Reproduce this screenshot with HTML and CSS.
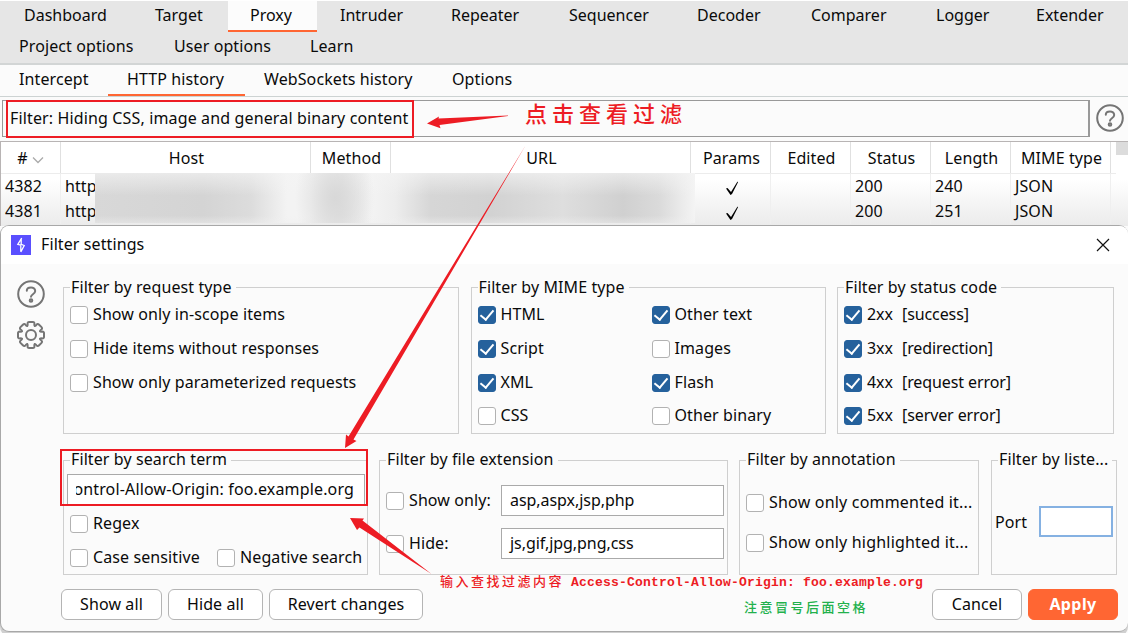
FILE: index.html
```html
<!DOCTYPE html>
<html lang="en">
<head>
<meta charset="utf-8">
<title>Proxy - Filter settings</title>
<link rel="stylesheet" href="styles.css">
</head>
<body>
<svg class="defs" aria-hidden="true">
  <symbol id="help" viewBox="0 0 28 28">
    <circle cx="14" cy="14" r="12.800"/>
    <path d="M9.800 10.800C9.800 8.600 11.800 7.400 14 7.400s4.200 1.400 4.200 3.600c0 3.200-4.200 3.200-4.200 5.800"/>
    <circle class="dot" cx="14" cy="20.500" r="1.300"/>
  </symbol>
  <symbol id="gear" viewBox="-14 -14 28 28">
    <g id="tooth"><path d="M9.100-3.800Q10-3.100 11.200-3.400 13-3.500 13-1.900V1.900Q13 3.500 11.200 3.400 10 3.100 9.100 3.800"/></g>
    <use href="#tooth" transform="rotate(45)"/><use href="#tooth" transform="rotate(90)"/>
    <use href="#tooth" transform="rotate(135)"/><use href="#tooth" transform="rotate(180)"/>
    <use href="#tooth" transform="rotate(225)"/><use href="#tooth" transform="rotate(270)"/>
    <use href="#tooth" transform="rotate(315)"/>
    <circle r="5"/>
  </symbol>
  <symbol id="tick" viewBox="0 0 14 16">
    <path d="M1 8.500 2.500 8 6 12 12.500 1.500 13 2.200 7 14 5.500 15Z"/>
  </symbol>
</svg>

<nav class="main-tabs">
  <div class="tab-row first">
    <span>Dashboard</span><span>Target</span><span class="on">Proxy</span><span>Intruder</span><span>Repeater</span><span>Sequencer</span><span>Decoder</span><span>Comparer</span><span>Logger</span><span>Extender</span>
  </div>
  <div class="tab-row second"><span>Project options</span><span>User options</span><span>Learn</span></div>
</nav>
<nav class="sub-tabs"><span>Intercept</span><span class="on">HTTP history</span><span>WebSockets history</span><span>Options</span></nav>

<section class="filter-bar">
  <div class="filter-field"><span>Filter: Hiding CSS, image and general binary content</span></div>
  <svg class="icon"><use href="#help"/></svg>
</section>

<section class="history">
  <div class="row head">
    <span># <svg class="sort" viewBox="0 0 12 8"><path d="M1 1.500 6 6.500 11 1.500"/></svg></span><span>Host</span><span>Method</span><span>URL</span><span>Params</span><span>Edited</span><span>Status</span><span>Length</span><span>MIME type</span><span class="end"></span>
  </div>
  <div class="rows">
    <div class="row"><span>4382</span><span>http</span><span></span><span></span><span class="mark"><svg><use href="#tick"/></svg></span><span></span><span>200</span><span>240</span><span>JSON</span><span class="end"></span></div>
    <div class="row"><span>4381</span><span>http</span><span></span><span></span><span class="mark"><svg><use href="#tick"/></svg></span><span></span><span>200</span><span>251</span><span>JSON</span><span class="end"></span></div>
  </div>
  <div class="masked"></div>
  <div class="thumb"></div>
</section>

<section class="dialog">
  <header>
    <svg class="logo" viewBox="0 0 20 20"><rect width="20" height="20"/><path d="M10.700 3 6.800 9.400 9.800 10.200M10.200 3.500V9.300L13.200 10.500 9.800 17M9.800 16.500V10.200"/></svg>
    <h1>Filter settings</h1>
    <svg class="close" viewBox="0 0 14 14"><path d="M1 1 13 13M13 1 1 13"/></svg>
  </header>
  <div class="body">
    <aside><svg class="icon"><use href="#help"/></svg><svg class="icon gear"><use href="#gear"/></svg></aside>
    <div class="groups top">
      <fieldset><legend>Filter by request type</legend>
        <div class="checks">
          <label><i></i>Show only in-scope items</label>
          <label><i></i>Hide items without responses</label>
          <label><i></i>Show only parameterized requests</label>
        </div>
      </fieldset>
      <fieldset><legend>Filter by MIME type</legend>
        <div class="checks two">
          <label><i class="on"></i>HTML</label><label><i class="on"></i>Other text</label>
          <label><i class="on"></i>Script</label><label><i></i>Images</label>
          <label><i class="on"></i>XML</label><label><i class="on"></i>Flash</label>
          <label><i></i>CSS</label><label><i></i>Other binary</label>
        </div>
      </fieldset>
      <fieldset><legend>Filter by status code</legend>
        <div class="checks codes">
          <label><i class="on"></i><b>2xx</b>[success]</label>
          <label><i class="on"></i><b>3xx</b>[redirection]</label>
          <label><i class="on"></i><b>4xx</b>[request error]</label>
          <label><i class="on"></i><b>5xx</b>[server error]</label>
        </div>
      </fieldset>
    </div>
    <div class="groups bottom">
      <fieldset><legend>Filter by search term</legend>
        <div class="field term"><span><em>ontrol-Allow-Origin: foo.example.org</em></span></div>
        <div class="term-checks">
          <label><i></i>Regex</label>
          <div><label><i></i>Case sensitive</label><label><i></i>Negative search</label></div>
        </div>
      </fieldset>
      <fieldset><legend>Filter by file extension</legend>
        <div class="ext">
          <label><i></i>Show only:</label><div class="field">asp,aspx,jsp,php</div>
          <label><i></i>Hide:</label><div class="field js">js,gif,jpg,png,css</div>
        </div>
      </fieldset>
      <fieldset><legend>Filter by annotation</legend>
        <div class="notes">
          <label><i></i>Show only commented it...</label>
          <label><i></i>Show only highlighted it...</label>
        </div>
      </fieldset>
      <fieldset class="listener"><legend>Filter by liste...</legend>
        <div class="port"><span>Port</span><div class="field focus"></div></div>
      </fieldset>
    </div>
    <footer>
      <button class="show">Show all</button><button class="hide">Hide all</button><button class="revert">Revert changes</button>
      <button class="cancel">Cancel</button><button class="apply">Apply</button>
    </footer>
  </div>
</section>

<svg class="arrows" viewBox="0 0 1128 633">
  <rect x="7" y="101" width="406" height="36"/>
  <rect x="61" y="450" width="306" height="55"/>
  <path d="M508 115.500 438.500 118.500 439 116.500 427 123.500 440.500 128.300 439.500 125 508 116Z"/>
  <path d="M525.500 145.500 348.500 436.500 346 434.500 345 448 356.500 441 353.500 439.500Z"/>
  <path d="M431.500 574 362.500 520.500 364 518.500 350 518 357 530 359.500 527.500Z"/>
</svg>
<p class="note click" lang="zh">点击查看过滤</p>
<p class="note enter" lang="zh">输入查找过滤内容<span>Access-Control-Allow-Origin: foo.example.org</span></p>
<p class="note space" lang="zh">注意冒号后面空格</p>
</body>
</html>
```

FILE: styles.css
```css
* { box-sizing: border-box; }
body {
  margin: 0;
  width: 1128px;
  height: 633px;
  overflow: hidden;
  position: relative;
  background: #fbfbfb;
  color: #0a0a0a;
  font: 16px/24px "Noto Sans", "Open Sans", sans-serif;
  letter-spacing: 0.100px;
  white-space: nowrap;
}
.defs { position: absolute; width: 0; height: 0; }

/* Tabs */
.main-tabs { height: 65px; border-top: 1px solid #fff; border-bottom: 2px solid #d2d5d5; background: #e6e6e6; }
.tab-row { display: grid; height: 31px; }
.tab-row span { padding: 2px 0 0 22px; }
.first { padding-left: 2px; grid-template-columns: 131px 95px 90px 111px 118px 128px 114px 125px 100px 112px; letter-spacing: 0; }
.first .on { width: 89px; background: #fcfcfc; border-bottom: 2px solid #ff6633; }
.second { grid-template-columns: 155px 136px 100px; }
.tab-row.second span { padding-left: 19px; }
.sub-tabs { display: grid; grid-template-columns: 108px 137px 188px 120px; height: 32px; border-bottom: 1px solid #cdd3d3; }
.sub-tabs span { padding: 2px 0 0 19px; }
.sub-tabs .on { border-bottom: 2px solid #ff6633; }

/* Filter bar */
.filter-bar { display: flex; height: 44px; padding: 3px 0 4px 2px; align-items: center; gap: 5.500px; }
.filter-field { flex: none; width: 1088px; height: 37px; border: 1px solid #999; border-right-width: 2px; padding: 5px 0 0 7px; letter-spacing: 0.140px; }
.icon { width: 28px; height: 28px; flex: none; fill: none; stroke: #757575; stroke-width: 2; stroke-linecap: round; stroke-linejoin: round; }
.icon .dot { fill: #757575; stroke: none; }
.filter-bar .icon { margin-top: -1px; }

/* History table */
.history { position: relative; height: 85px; border-top: 1px solid #b8b4b4; border-left: 1px solid #b8b4b4; background: #fff; }
.row { display: grid; width: 1115px; grid-template-columns: 60px 250px 80px 300px 80px 80px 80px 80px 100px 5px; height: 25px; }
.row span { border-right: 1px solid #efefef; padding-left: 4px; }
.row .end { border: 0; }
.head { height: 32px; border-bottom: 1px solid #ececec; }
.head span { border-color: #e0e0e0; text-align: center; padding: 4px 0 0 2px; }
.head span:first-child { padding-left: 0; }
.sort { width: 12px; height: 8px; fill: none; stroke: #aaa; stroke-width: 1.3; }
.rows { height: 52px; background: linear-gradient(#fff 10%, #ebebeb); }
.mark svg { width: 14px; height: 16px; margin: 6px 0 0 30px; display: block; }
.masked {
  position: absolute; left: 94px; top: 31px; width: 600px; height: 50px;
  background:
    radial-gradient(ellipse 40px 60px at 240px 25px, #d8d8d8, transparent),
    linear-gradient(#f4f4f4aa, transparent 45%, transparent 85%, #f0f0f077),
    linear-gradient(90deg, #d8d8d8, #d4d4d4 18%, #dcdcdc 26%, #f3f3f3 32%, #f3f3f3 36%, #e4e4e4 41%, #f3f3f3 46%, #ededed 50%, #d6d6d6 56%, #d2d2d2 66%, #dedede 78%, #d0d0d0 88%, #dadada 94%, #f4f4f4);
}
.thumb { position: absolute; right: 0; top: 0; width: 12px; height: 13px; background: #dcdcdc; }

/* Dialog */
.dialog { position: relative; margin-top: -1px; height: 407px; border: 1px solid #a8a8a8; border-right: 0; border-radius: 9px; background: #fbfbfb; box-shadow: 0 4px #d0d0d0; overflow: hidden; }
.dialog header { display: flex; align-items: center; height: 38px; background: #fff; padding-left: 10px; }
.logo { width: 20px; height: 20px; fill: #5a4fff; stroke-width: 0; }
.logo path { fill: none; stroke: #fff; stroke-width: 1.3; }
h1 { margin: -2px 0 0 10px; font-size: 16px; font-weight: 400; }
.close { width: 14px; height: 14px; margin: 0 18px 0 auto; fill: none; stroke: #111; stroke-width: 1.2; }
.body { display: grid; grid-template: 175px 125px 40px / 61px 1fr; padding-top: 11px; }
aside { grid-row: 1 / 4; padding: 5px 0 0 15.600px; display: flex; flex-direction: column; gap: 13px; }
.groups { display: grid; align-items: start; padding-left: 1px; }
.top { grid-template-columns: 396px 355px 277px; column-gap: 11.500px; }
.bottom { grid-template-columns: 305px 349px 240px 127px; column-gap: 11px; }
fieldset { margin: 0; padding: 0; min-width: 0; border: 1px solid #cfcfcf; height: 159px; }
.bottom fieldset { height: 127px; margin-top: -2px; }
fieldset.listener { margin-left: 1px; }
legend { margin-left: 6px; padding: 0 4px 0 1px; height: 25px; line-height: 25px; }
.bottom legend { line-height: 23px; }
label { display: flex; align-items: center; height: 24px; }
label i { flex: none; width: 18px; height: 18px; margin: 2px 5px 0 0; border: 1.500px solid #b2b2b2; border-radius: 3px; background: #fff; }
label i.on { border-color: #25619c; background: #25619c; display: grid; place-items: center; }
label i.on::after { content: ""; width: 6px; height: 11px; margin-top: -3px; border: solid #fff; border-width: 0 2.500px 2.500px 0; transform: rotate(40deg); }
.checks { display: grid; grid-template-rows: 34px 34px 33px 33px; padding: 2px 0 0 6px; }
.two { grid-template-columns: 174px 160px; }
.codes { letter-spacing: -0.100px; }
.codes b { width: 35px; font-weight: 400; }
.field { height: 31px; border: 1px solid #aaa; background: #fff; padding: 2px 8px; overflow: hidden; }
.term { width: 298px; margin: 1px 0 0 3px; }
.term span { display: flex; justify-content: flex-end; overflow: hidden; margin-right: 2px; }
.term em { font-style: normal; letter-spacing: 0.150px; }
.term-checks { padding: 6px 0 0 6px; display: grid; gap: 10px; }
.term-checks div { display: grid; grid-template-columns: 147px 150px; }
.ext { display: grid; grid-template-columns: 115px 223px; row-gap: 12px; padding: 12px 0 0 6px; }
.ext label { height: 29px; }
.ext .field { letter-spacing: -0.050px; }
.notes { display: grid; row-gap: 16px; padding: 17px 0 0 6px; letter-spacing: 0.200px; }
.port { display: flex; align-items: center; justify-content: space-between; padding: 33px 3px 0; }
.focus { width: 74px; border: 2px solid #85b1e2; }
footer { display: flex; grid-column: 2; gap: 6px; height: 31px; margin: 14px 0 0 -1px; }
button { font: inherit; letter-spacing: 0.100px; color: inherit; padding: 0 0 2px; border: 1.500px solid #b4b4b4; border-radius: 6px; background: #fff; }
.show { width: 101px; }
.hide { width: 95px; }
.revert { width: 154px; }
.cancel { width: 90px; margin-left: auto; }
.apply { width: 90px; margin-right: 10px; border-color: #ff6633; background: #ff6633; color: #fff; font-weight: 700; letter-spacing: 0.400px; }

/* Callouts drawn over the window */
.arrows { position: absolute; inset: 0; width: 1128px; height: 633px; fill: #ed1c24; }
.arrows rect { fill: none; stroke: #ed1c24; stroke-width: 2; }
.note { position: absolute; margin: 0; color: #ed1c24; font-family: "Liberation Mono", "Noto Sans CJK SC", monospace; }
.click { left: 525px; top: 99px; font: 500 22px/26px "Noto Sans CJK SC", sans-serif; letter-spacing: 5px; }
.enter { left: 440px; top: 571px; font-size: 13px; font-weight: 500; letter-spacing: 2.500px; }
.enter span { margin-left: 7px; font-weight: 700; letter-spacing: 0.200px; }
.space { left: 744px; top: 597px; font-size: 13px; font-weight: 500; letter-spacing: 2.500px; color: #22b14c; }
```
